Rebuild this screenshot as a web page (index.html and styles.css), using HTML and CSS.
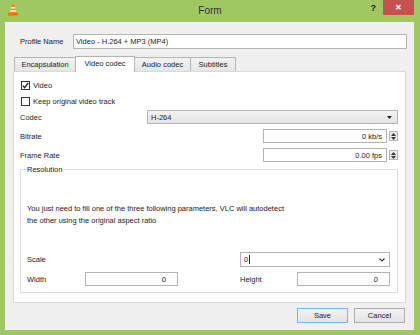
FILE: index.html
```html
<!DOCTYPE html>
<html>
    <head>
        <link rel="stylesheet" href="styles.css">
        <title>Form</title>
    </head>
    <body>
        <div class="window">
            <div class="titlebar">
                <div class="tb-left">
                    <svg class="cone" width="10" height="12" viewBox="0 0 10 12">
                        <path d="M3.6 0.5 L6.4 0.5 L8.6 9 L1.4 9 Z" fill="#f08a12"/>
                        <path d="M3.1 3 L6.9 3 L7.3 4.6 L2.7 4.6 Z" fill="#fff"/>
                        <path d="M2.3 6.2 L7.7 6.2 L8.1 7.7 L1.9 7.7 Z" fill="#fff"/>
                        <rect x="0" y="9" width="10" height="2.6" fill="#e07a0c"/>
                    </svg>
                </div>
                <div class="tb-title">Form</div>
                <div class="tb-right">
                    <span class="help">?</span>
                    <span class="close">&#x2715;</span>
                </div>
            </div>

            <div class="content">
                <div class="profile-row">
                    <span class="profile-label">Profile Name</span>
                    <div class="field profile">Video - H.264 + MP3 (MP4)</div>
                </div>

                <div class="tabs">
                    <div class="tab tab-encap">Encapsulation</div>
                    <div class="tab tab-video active">Video codec</div>
                    <div class="tab tab-audio">Audio codec</div>
                    <div class="tab tab-subs">Subtitles</div>
                </div>

                <div class="pane">
                    <div class="check-row">
                        <span class="checkbox">
                            <svg width="7" height="7" viewBox="0 0 7 7"><path d="M0.8 3.6 L2.6 5.6 L6.3 0.9" fill="none" stroke="#222" stroke-width="1.4"/></svg>
                        </span>
                        Video
                    </div>
                    <div class="check-row second">
                        <span class="checkbox"></span>
                        Keep original video track
                    </div>

                    <div class="form-row first">
                        <span>Codec</span>
                        <div class="combo codec">
                            <span>H-264</span>
                            <svg width="5" height="3" viewBox="0 0 5 3"><path d="M0 0 L5 0 L2.5 3 Z" fill="#222"/></svg>
                        </div>
                    </div>
                    <div class="form-row">
                        <span>Bitrate</span>
                        <div class="spin">
                            <div class="field num">0 kb/s</div>
                            <div class="spin-btns">
                                <svg width="5" height="3" viewBox="0 0 5 3"><path d="M0 3 L5 3 L2.5 0 Z" fill="#333"/></svg>
                                <svg width="5" height="3" viewBox="0 0 5 3"><path d="M0 0 L5 0 L2.5 3 Z" fill="#333"/></svg>
                            </div>
                        </div>
                    </div>
                    <div class="form-row">
                        <span>Frame Rate</span>
                        <div class="spin">
                            <div class="field num">0.00 fps</div>
                            <div class="spin-btns">
                                <svg width="5" height="3" viewBox="0 0 5 3"><path d="M0 3 L5 3 L2.5 0 Z" fill="#333"/></svg>
                                <svg width="5" height="3" viewBox="0 0 5 3"><path d="M0 0 L5 0 L2.5 3 Z" fill="#333"/></svg>
                            </div>
                        </div>
                    </div>

                    <fieldset class="group">
                        <legend>Resolution</legend>
                        <p class="hint">You just need to fill one of the three following parameters, VLC will autodetect<br>the other using the original aspect ratio</p>
                        <div class="res-grid">
                            <span class="res-label">Scale</span>
                            <div class="field scale">
                                <span>0<span class="caret"></span></span>
                                <svg width="6" height="4" viewBox="0 0 6 4"><path d="M0.5 0.5 L3 3 L5.5 0.5" fill="none" stroke="#333" stroke-width="1.1"/></svg>
                            </div>
                            <span class="res-label">Width</span>
                            <div class="field num small">0</div>
                            <span></span>
                            <span class="res-label">Height</span>
                            <div class="field num small">0</div>
                        </div>
                    </fieldset>
                </div>

                <div class="buttons">
                    <button class="btn default">Save</button>
                    <button class="btn">Cancel</button>
                </div>
            </div>
        </div>
    </body>
</html>
```

FILE: styles.css
```css
html, body {
    margin: 0;
    padding: 0;
}
body {
    width: 420px;
    height: 335px;
    overflow: hidden;
    background-color: #a0c862;
    font-family: "Liberation Sans", Arial, sans-serif;
    font-size: 7.5px;
    color: #222;
}
.window {
    display: flex;
    flex-direction: column;
    height: 335px;
}
.titlebar {
    height: 22px;
    display: grid;
    grid-template-columns: 1fr auto 1fr;
    align-items: start;
}
.tb-left {
    padding: 4px 0 0 8px;
}
.cone {
    display: block;
}
.tb-title {
    font-size: 10px;
    color: #333;
    line-height: 22px;
}
.tb-right {
    display: flex;
    justify-content: flex-end;
    align-items: flex-start;
    padding-right: 6px;
}
.help {
    font-size: 9px;
    font-weight: bold;
    color: #222;
    margin: 3px 7px 0 0;
}
.close {
    width: 31px;
    height: 15px;
    background-color: #c75050;
    color: #fff;
    font-size: 8px;
    font-weight: bold;
    display: flex;
    align-items: center;
    justify-content: center;
}
.content {
    margin: 0 6px 5px 5px;
    height: 308px;
    box-sizing: border-box;
    background-color: #f0f0f0;
    padding: 12px 7px 0 8px;
}
.profile-row {
    display: flex;
    align-items: center;
}
.profile-label {
    width: 53px;
    margin-left: 7px;
}
.field {
    box-sizing: border-box;
    height: 15px;
    background-color: #fff;
    border: 1px solid #b4b4b4;
    display: flex;
    align-items: center;
}
.profile {
    flex: 1;
    padding-left: 2px;
}
.tabs {
    display: flex;
    align-items: flex-end;
    margin: 7px 0 0 1px;
}
.tab {
    box-sizing: border-box;
    height: 14px;
    border: 1px solid #b4b4b4;
    border-bottom: none;
    background: linear-gradient(#f2f2f2, #e6e6e6);
    display: flex;
    align-items: center;
    justify-content: center;
    margin-left: -1px;
}
.tab:first-child {
    margin-left: 0;
}
.tab.active {
    height: 16px;
    background: #fff;
    margin-bottom: -1px;
    position: relative;
    z-index: 1;
    padding-bottom: 2px;
}
.tab-encap { width: 62px; }
.tab-video { width: 60px; }
.tab-audio { width: 57px; }
.tab-subs { width: 46px; }
.pane {
    box-sizing: border-box;
    width: 393px;
    height: 232px;
    background-color: #fff;
    border: 1px solid #d9d9d9;
    padding: 8px 7px 0 6px;
}
.check-row {
    display: flex;
    align-items: center;
    height: 10px;
}
.check-row.second {
    margin-top: 6px;
}
.checkbox {
    box-sizing: border-box;
    width: 9px;
    height: 9px;
    border: 1px solid #333;
    background: #fff;
    margin: 0 3px 0 1px;
    display: flex;
    align-items: center;
    justify-content: center;
}
.form-row {
    display: grid;
    grid-template-columns: 127px 1fr;
    align-items: center;
    height: 14px;
    margin-top: 5px;
}
.form-row.first {
    margin-top: 4px;
}
.combo {
    box-sizing: border-box;
    height: 14px;
    border: 1px solid #b4b4b4;
    background: linear-gradient(#f3f3f3, #e4e4e4);
    display: flex;
    align-items: center;
    justify-content: space-between;
    padding: 0 5px 0 3px;
}
.spin {
    justify-self: end;
    display: flex;
    align-items: center;
}
.spin .field {
    width: 124px;
    height: 14px;
}
.num {
    justify-content: flex-end;
    padding-right: 4px;
}
.spin-btns {
    box-sizing: border-box;
    width: 9px;
    height: 10px;
    margin-left: 2px;
    border: 1px solid #b4b4b4;
    background: #ececec;
    display: flex;
    flex-direction: column;
    align-items: center;
    justify-content: space-around;
}
.group {
    margin: 3px 0 0;
    padding: 0 6px 6px;
    border: 1px solid #dcdcdc;
    min-width: 0;
}
.group legend {
    padding: 0;
    line-height: 9px;
}
.hint {
    margin: 29px 0 0;
    line-height: 12px;
}
.res-grid {
    display: grid;
    grid-template-columns: 58px 93px 62px 57px 93px;
    grid-template-rows: 15px 14px;
    row-gap: 5px;
    align-items: center;
    margin-top: 25px;
}
.scale {
    grid-column: 4 / 6;
    justify-content: space-between;
    padding: 0 4px 0 3px;
}
.caret {
    display: inline-block;
    width: 1px;
    height: 9px;
    background: #222;
    margin-left: 1px;
    vertical-align: -2px;
}
.field.small {
    height: 14px;
    padding-right: 11px;
}
.buttons {
    display: flex;
    justify-content: flex-end;
    gap: 6px;
    margin: 5px 2px 0 0;
}
.btn {
    box-sizing: border-box;
    width: 51px;
    height: 15px;
    padding: 0;
    font-family: inherit;
    font-size: 7.5px;
    color: #222;
    border: 1px solid #adadad;
    background: linear-gradient(#f2f2f2, #e3e3e3);
}
.btn.default {
    border-color: #7eb4ea;
}
```
